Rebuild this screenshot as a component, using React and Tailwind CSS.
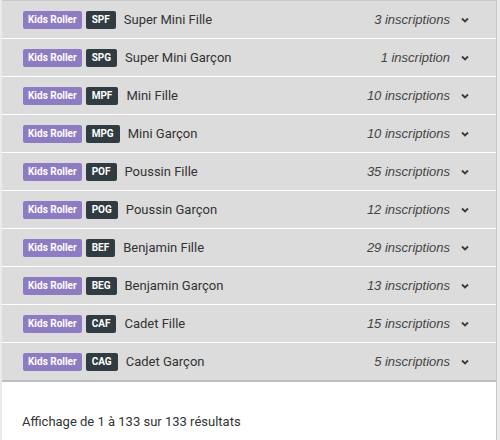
import React from 'react';

const rows = [
  { code: 'SPF', label: 'Super Mini Fille', count: '3 inscriptions' },
  { code: 'SPG', label: 'Super Mini Garçon', count: '1 inscription' },
  { code: 'MPF', label: 'Mini Fille', count: '10 inscriptions' },
  { code: 'MPG', label: 'Mini Garçon', count: '10 inscriptions' },
  { code: 'POF', label: 'Poussin Fille', count: '35 inscriptions' },
  { code: 'POG', label: 'Poussin Garçon', count: '12 inscriptions' },
  { code: 'BEF', label: 'Benjamin Fille', count: '29 inscriptions' },
  { code: 'BEG', label: 'Benjamin Garçon', count: '13 inscriptions' },
  { code: 'CAF', label: 'Cadet Fille', count: '15 inscriptions' },
  { code: 'CAG', label: 'Cadet Garçon', count: '5 inscriptions' },
];

function Chevron() {
  return (
    <svg width="8" height="6" viewBox="0 0 8 6" className="text-[#3a3a3a]">
      <path d="M1 1.5 L4 4.5 L7 1.5" fill="none" stroke="currentColor" strokeWidth="1.8" />
    </svg>
  );
}

export default function App() {
  return (
    <div className="w-[500px] h-[440px] bg-[#ebebeb] font-['Roboto',sans-serif] overflow-hidden">
      <div className="ml-[2px] w-[495px] h-full bg-white border-r border-[#c6c6c6]">
        <div className="border-t border-[#c8c8c8]">
          {rows.map((row, idx) => (
            <div
              key={row.code}
              className={`h-[38px] flex items-center bg-[#dcdcdc] pl-[21px] pr-[27px] ${
                idx === rows.length - 1 ? 'border-b-2 border-[#bdbdbd] h-[39px]' : 'border-b border-white'
              }`}
            >
              <span className="h-[18px] px-[5px] flex items-center rounded-[2px] bg-[#8e7cc3] text-white text-[10px] font-bold leading-none">
                Kids Roller
              </span>
              <span className="ml-[4px] h-[18px] px-[6px] flex items-center rounded-[2px] bg-[#303c41] text-white text-[10px] font-bold leading-none">
                {row.code}
              </span>
              <span className="ml-[8px] text-[13px] text-[#333333]">{row.label}</span>
              <span className="ml-auto text-[13px] italic text-[#444444] font-['Liberation_Sans',Arial,sans-serif]">
                {row.count}
              </span>
              <span className="ml-[11px] flex items-center">
                <Chevron />
              </span>
            </div>
          ))}
        </div>
        <div className="pt-[30px] pl-[20px] text-[13px] text-[#333333]">
          Affichage de 1 à 133 sur 133 résultats
        </div>
      </div>
    </div>
  );
}
